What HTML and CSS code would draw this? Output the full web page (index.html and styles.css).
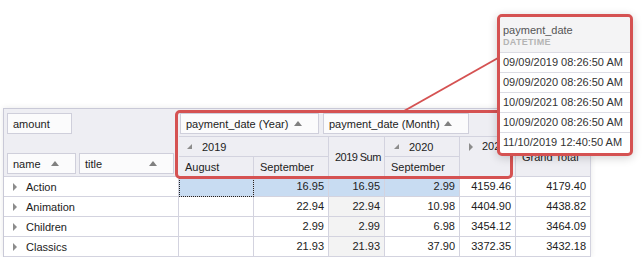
FILE: index.html
```html
<!DOCTYPE html>
<html lang="en">
<head>
  <meta charset="UTF-8">
  <title>Pivot grid - payment_date filter</title>
  <link rel="stylesheet" href="styles.css">
</head>
<body>
  <div class="pivot">
    <div class="data-area">
      <div class="field f-amount">amount</div>
    </div>
    <div class="col-fields">
      <div class="field f-year">payment_date (Year)<span class="sort"></span></div>
      <div class="field f-month">payment_date (Month)<span class="sort"></span></div>
    </div>
    <div class="row-fields">
      <div class="field f-name">name<span class="sort"></span></div>
      <div class="field f-title">title<span class="sort"></span></div>
    </div>

    <div class="ch h-2019"><span class="exp"></span>2019</div>
    <div class="ch h-aug">August</div>
    <div class="ch h-sep19">September</div>
    <div class="ch h-sum19">2019 Sum</div>
    <div class="ch h-2020"><span class="exp"></span>2020</div>
    <div class="ch h-sep20">September</div>
    <div class="ch h-2021"><span class="arrow"></span>2021</div>
    <div class="ch h-grand">Grand Total</div>

    <div class="rh"><span class="arrow"></span>Action</div>
    <div class="v sel focus"></div>
    <div class="v sel">16.95</div>
    <div class="v sel">16.95</div>
    <div class="v sel">2.99</div>
    <div class="v">4159.46</div>
    <div class="v">4179.40</div>

    <div class="rh"><span class="arrow"></span>Animation</div>
    <div class="v"></div>
    <div class="v">22.94</div>
    <div class="v tot">22.94</div>
    <div class="v">10.98</div>
    <div class="v">4404.90</div>
    <div class="v">4438.82</div>

    <div class="rh"><span class="arrow"></span>Children</div>
    <div class="v"></div>
    <div class="v">2.99</div>
    <div class="v tot">2.99</div>
    <div class="v">6.98</div>
    <div class="v">3454.12</div>
    <div class="v">3464.09</div>

    <div class="rh"><span class="arrow"></span>Classics</div>
    <div class="v"></div>
    <div class="v">21.93</div>
    <div class="v tot">21.93</div>
    <div class="v">37.90</div>
    <div class="v">3372.35</div>
    <div class="v">3432.18</div>
  </div>

  <!-- highlight over the column header area -->
  <div class="mark"></div>

  <svg class="link" width="644" height="257" viewBox="0 0 644 257">
    <line x1="498" y1="58" x2="404" y2="111" />
  </svg>

  <div class="callout">
    <div class="callout-head">
      <div class="callout-name">payment_date</div>
      <div class="callout-type">DATETIME</div>
    </div>
    <div class="callout-row">09/09/2019 08:26:50 AM</div>
    <div class="callout-row">09/09/2020 08:26:50 AM</div>
    <div class="callout-row">10/09/2021 08:26:50 AM</div>
    <div class="callout-row">10/09/2020 08:26:50 AM</div>
    <div class="callout-row">11/10/2019 12:40:50 AM</div>
  </div>
</body>
</html>
```

FILE: styles.css
```css
body {
  margin: 0;
  background: #fff;
  font-family: 'Liberation Sans', Arial, sans-serif;
  font-size: 11px;
  color: #222;
  position: relative;
  width: 644px;
  height: 257px;
  overflow: hidden;
}
.pivot {
  display: grid;
  grid-template-columns: 175px 75px 75px 56px 75px 56px 75px;
  grid-template-rows: 28px 20px 20px repeat(4, 20px);
  width: max-content;
  margin: 108px 0 0 3px;
  border-left: 1px solid #c9c9d7;
  border-top: 1px solid #c9c9d7;
  background: #eeeef3;
  box-shadow: 0 0 6px rgba(0,0,0,0.09);
}
.pivot > div {
  box-sizing: border-box;
}

/* field areas */
.data-area {
  grid-column: 1;
  grid-row: 1;
  padding: 4px 0 0 3px;
}
.col-fields {
  grid-column: 2 / 8;
  grid-row: 1;
  display: flex;
  gap: 4px;
  padding: 4px 0 0 1px;
  border-right: 1px solid #d3d3df;
  border-bottom: 1px solid #d3d3df;
}
.row-fields {
  grid-column: 1;
  grid-row: 2 / 4;
  display: flex;
  align-items: flex-end;
  gap: 3px;
  padding: 0 0 2px 3px;
  border-bottom: 1px solid #d3d3df;
}
.field {
  box-sizing: border-box;
  height: 21px;
  display: flex;
  align-items: center;
  justify-content: space-between;
  padding: 0 16px 0 5px;
  background: #fbfbfc;
  border: 1px solid #cfcfdb;
  color: #222;
}
.f-amount { width: 65px; }
.f-name { width: 69px; }
.f-title { width: 95px; }
.f-year { width: 139px; }
.f-month { width: 146px; }
.sort {
  width: 0;
  height: 0;
  border-left: 4px solid transparent;
  border-right: 4px solid transparent;
  border-bottom: 5px solid #808080;
}

/* column headers */
.ch {
  display: flex;
  align-items: center;
  padding-left: 6px;
  border-right: 1px solid #d3d3df;
  border-bottom: 1px solid #d3d3df;
  white-space: nowrap;
  overflow: hidden;
}
.exp {
  width: 0;
  height: 0;
  border-left: 5px solid transparent;
  border-bottom: 5px solid #8c8c8c;
  margin: 0 10px 0 2px;
}
.arrow {
  width: 0;
  height: 0;
  border-top: 4px solid transparent;
  border-bottom: 4px solid transparent;
  border-left: 4px solid #8c8c8c;
  margin-right: 9px;
}
.h-2019 { grid-column: 2 / 4; grid-row: 2; }
.h-aug { grid-column: 2; grid-row: 3; }
.h-sep19 { grid-column: 3; grid-row: 3; }
.h-sum19 {
  grid-column: 4;
  grid-row: 2 / 4;
  letter-spacing: -0.55px;
}
.h-2020 { grid-column: 5; grid-row: 2; padding-left: 7px; }
.h-sep20 { grid-column: 5; grid-row: 3; }
.h-2021 {
  grid-column: 6;
  grid-row: 2 / 4;
  align-items: flex-start;
  line-height: 19px;
  padding-left: 9px;
}
.h-2021 .arrow { margin-top: 6px; }
.h-grand { grid-column: 7; grid-row: 2 / 4; }

/* data rows */
.rh {
  grid-column: 1;
  display: flex;
  align-items: center;
  padding-left: 9px;
  background: #fff;
  border-right: 1px solid #d3d3df;
  border-bottom: 1px solid #d3d3df;
}
.v {
  background: #fff;
  text-align: right;
  padding-right: 4px;
  line-height: 19px;
  border-right: 1px solid #d3d3df;
  border-bottom: 1px solid #d3d3df;
}
.tot {
  background: #f3f3f3;
}
.sel {
  background: #c8dcf2;
}
.focus {
  outline: 1px dotted #222;
  outline-offset: -1px;
}

/* annotation */
.mark {
  position: absolute;
  left: 175px;
  top: 110px;
  width: 338px;
  height: 69px;
  box-sizing: border-box;
  border: 3px solid #d55252;
  border-radius: 5px;
}
.link {
  position: absolute;
  left: 0;
  top: 0;
  pointer-events: none;
}
.link line {
  stroke: #d55252;
  stroke-width: 2;
}
.callout {
  position: absolute;
  left: 497px;
  top: 14px;
  width: 136px;
  box-sizing: border-box;
  border: 3px solid #d55252;
  border-radius: 5px;
  background: #fff;
  box-shadow: 0 2px 10px rgba(0,0,0,0.18);
  overflow: hidden;
}
.callout-head {
  height: 36px;
  box-sizing: border-box;
  padding: 7px 0 0 3px;
  background: #f4f4f5;
  border-bottom: 1px solid #dcdce4;
}
.callout-name {
  line-height: 13px;
  color: #555;
}
.callout-type {
  line-height: 10px;
  font-size: 9px;
  font-weight: bold;
  letter-spacing: 0.3px;
  color: #b4b4b4;
}
.callout-row {
  height: 20px;
  line-height: 19px;
  box-sizing: border-box;
  padding-left: 3px;
  color: #333;
  white-space: nowrap;
  border-bottom: 1px solid #dcdce4;
}
.callout-row:last-child {
  border-bottom: none;
}
```
